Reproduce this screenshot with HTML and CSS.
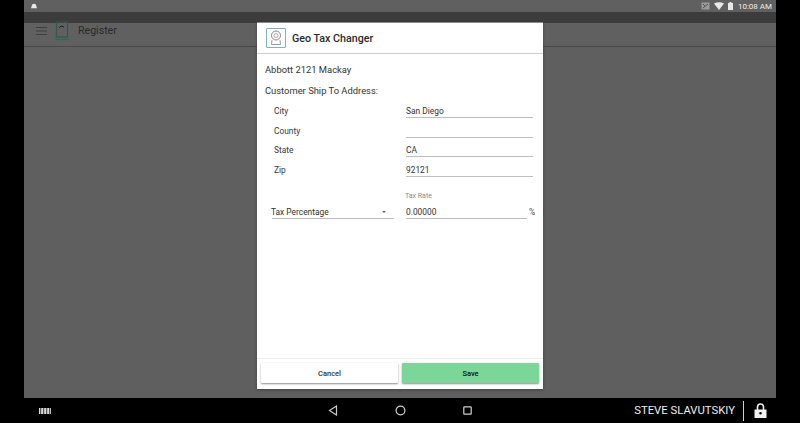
FILE: index.html
```html
<!DOCTYPE html>
<html lang="en">
<head>
    <meta charset="UTF-8">
    <meta name="viewport" content="width=device-width, initial-scale=1.0">
    <title>Geo Tax Changer</title>
    <link rel="stylesheet" href="styles.css">
</head>
<body>
    <div class="screen">
        <div class="status-bar">
            <svg class="status-app" width="6" height="6" viewBox="0 0 8 7"><path d="M1 3 Q1 0.5 4 0.5 Q7 0.5 7 3 L8 6.5 L0 6.5 Z" fill="#e8e8e8"/></svg>
            <div class="status-right">
                <svg width="9" height="8" viewBox="0 0 9 8"><rect x="0.5" y="0.5" width="8" height="7" fill="#9a9a9a"/><path d="M2 6 L7 2 M2 2 L4 4" stroke="#555" fill="none"/></svg>
                <svg width="10" height="8" viewBox="0 0 10 8"><path d="M0 1.5 Q5 -1 10 1.5 L5 8 Z" fill="#e8e8e8"/></svg>
                <svg width="5" height="8" viewBox="0 0 5 8"><path d="M1.5 0 H3.5 V1 H5 V8 H0 V1 H1.5 Z" fill="#e8e8e8"/></svg>
                <span class="clock">10:08 AM</span>
            </div>
        </div>
        <div class="dark-strip"></div>
        <div class="app-bar">
            <svg class="menu-icon" width="11" height="8" viewBox="0 0 11 8"><path d="M0 .5H11M0 4H11M0 7.5H11" stroke="#3f3f3f"/></svg>
            <svg class="register-icon" width="14" height="20" viewBox="0 0 14 20"><rect x="1.5" y="1" width="11" height="15" fill="none" stroke="#2f5a4c" stroke-width="1.2"/><path d="M4 7 L6 5 L9 6" stroke="#222" fill="none"/><path d="M0 18.5 H14" stroke="#2f6a56" stroke-width="1.4"/></svg>
            <span class="app-title">Register</span>
        </div>
        <div class="content"></div>

        <div class="dialog">
            <div class="dialog-head">
                <div class="logo">
                    <svg width="12" height="16" viewBox="0 0 12 16"><circle cx="6" cy="5.5" r="4.5" fill="none" stroke="#888"/><circle cx="6" cy="5.5" r="2" fill="none" stroke="#aaa"/><path d="M2 10 L1.5 14.5 H10.5 L10 10" fill="none" stroke="#999"/></svg>
                </div>
                <h1>Geo Tax Changer</h1>
            </div>
            <div class="dialog-body">
                <p class="line">Abbott 2121 Mackay</p>
                <p class="line line-ship">Customer Ship To Address:</p>
                <div class="fields">
                    <label>City</label><div class="input">San Diego</div>
                    <label>County</label><div class="input"></div>
                    <label>State</label><div class="input">CA</div>
                    <label>Zip</label><div class="input">92121</div>
                </div>
                <div class="tax-row">
                    <div class="select">
                        <span>Tax Percentage</span>
                        <i class="caret"></i>
                    </div>
                    <div class="rate">
                        <div class="rate-label">Tax Rate</div>
                        <div class="rate-input">
                            <div class="input">0.00000</div>
                            <span class="percent">%</span>
                        </div>
                    </div>
                </div>
            </div>
            <div class="dialog-foot">
                <button class="btn">Cancel</button>
                <button class="btn btn-save">Save</button>
            </div>
        </div>
    </div>

    <div class="nav-bar">
        <div class="barcode"></div>
        <div class="nav-buttons">
            <svg width="10" height="11" viewBox="0 0 10 11"><path d="M8.5 1 L1.5 5.5 L8.5 10 Z" fill="none" stroke="#c8c8c8" stroke-width="1.2"/></svg>
            <svg width="11" height="11" viewBox="0 0 11 11"><circle cx="5.5" cy="5.5" r="4.4" fill="none" stroke="#d0d0d0" stroke-width="1.2"/></svg>
            <svg width="9" height="9" viewBox="0 0 9 9"><rect x="0.8" y="0.8" width="7.4" height="7.4" rx="0.6" fill="none" stroke="#d0d0d0" stroke-width="1.2"/></svg>
        </div>
        <div class="user">
            <span class="user-name">STEVE SLAVUTSKIY</span>
            <span class="user-sep"></span>
            <svg width="13" height="15" viewBox="0 0 13 15"><path d="M3.5 7 V4 A3 3 0 0 1 9.5 4 V7" fill="none" stroke="#eee" stroke-width="1.6"/><path fill-rule="evenodd" d="M0.5 6.5 H12.5 V15 H0.5 Z M6.5 9 A1.3 1.3 0 1 0 6.5 11.6 A1.3 1.3 0 1 0 6.5 9 Z" fill="#f2f2f2"/></svg>
        </div>
    </div>
</body>
</html>
```

FILE: styles.css
```css
* {
    box-sizing: border-box;
}

html, body {
    height: 100%;
}

body {
    margin: 0;
    background-color: #000;
    font-family: Roboto, "Liberation Sans", sans-serif;
    color: #222;
    display: flex;
    flex-direction: column;
    overflow: hidden;
}

.screen {
    position: relative;
    flex: 1;
    margin: 0 24px;
    display: flex;
    flex-direction: column;
    background-color: #5f5f5f;
}

.status-bar {
    height: 12px;
    display: flex;
    align-items: center;
    justify-content: space-between;
    background-color: #606060;
    padding: 0 4px 0 7px;
}

.status-right {
    display: flex;
    align-items: center;
    gap: 4px;
}

.clock {
    margin-left: 1px;
    font-size: 8px;
    color: #ececec;
}

.dark-strip {
    height: 11px;
    background-color: #3c3c3c;
}

.app-bar {
    height: 24px;
    display: flex;
    align-items: center;
    padding: 0 0 8px 12px;
    border-bottom: 1px solid #4a4a4a;
    background-color: #606060;
}

.register-icon {
    margin-left: 8px;
}

.app-title {
    margin-left: 9px;
    font-size: 10.6px;
    color: #2a2a2a;
}

.content {
    flex: 1;
}

.dialog {
    position: absolute;
    top: 22px;
    left: 233px;
    width: 286px;
    height: 367px;
    display: flex;
    flex-direction: column;
    background-color: #fff;
    border-top: 1px solid #8a8a8a;
    box-shadow: 0 1px 3px rgba(0, 0, 0, 0.3);
}

.dialog-head {
    height: 31px;
    display: flex;
    align-items: center;
    padding-left: 9px;
    border-bottom: 1px solid #cfcfcf;
}

.logo {
    width: 20px;
    height: 20px;
    display: flex;
    align-items: center;
    justify-content: center;
    border: 1px solid #7fb5b5;
    border-radius: 1px;
}

.dialog-head h1 {
    margin: 0 0 0 6px;
    font-size: 10.7px;
    font-weight: 500;
    color: #2a2a2a;
}

.dialog-body {
    flex: 1;
    padding: 9px 6px 0 8px;
}

.line {
    margin: 0;
    height: 13px;
    line-height: 13px;
    font-size: 9.4px;
    color: #333;
}

.line-ship {
    margin-top: 8px;
}

.fields {
    margin-top: 5px;
    padding-left: 9px;
    display: grid;
    grid-template-columns: 132px 127px;
    grid-auto-rows: 19.6px;
}

.fields label {
    font-size: 8.4px;
    line-height: 12px;
    padding-top: 3px;
    color: #3a3a3a;
}

.input {
    border-bottom: 1px solid #bdbdbd;
    padding-top: 2px;
    font-size: 8.4px;
    line-height: 14px;
    height: 16px;
    color: #333;
}

.tax-row {
    margin-top: 12px;
    padding-left: 7px;
    display: flex;
    align-items: flex-end;
}

.select {
    flex: none;
    width: 122px;
    height: 16px;
    display: flex;
    align-items: center;
    justify-content: space-between;
    padding: 2px 8px 0 0;
    border-bottom: 1px solid #bdbdbd;
    font-size: 8.4px;
    color: #333;
}

.select span {
    margin-left: -1px;
}

.caret {
    width: 0;
    height: 0;
    border-left: 2.5px solid transparent;
    border-right: 2.5px solid transparent;
    border-top: 2.5px solid #666;
}

.rate {
    flex: none;
    margin-left: 12px;
}

.rate-label {
    margin-left: -1px;
    margin-bottom: 2px;
    font-size: 7px;
    line-height: 9px;
    color: #888;
}

.rate-input {
    display: flex;
}

.rate-input .input {
    width: 121px;
}

.percent {
    margin-left: 2px;
    padding-top: 2px;
    font-size: 8.4px;
    line-height: 14px;
    color: #444;
}

.dialog-foot {
    height: 30px;
    padding: 4px 4px 0;
    display: flex;
    gap: 4px;
    border-top: 1px solid #eee;
    margin-bottom: 1px;
}

.btn {
    flex: 1;
    height: 20px;
    padding: 0;
    border: none;
    border-radius: 1px;
    background-color: #fff;
    box-shadow: 0 1px 2px rgba(0, 0, 0, 0.45);
    font-family: inherit;
    font-size: 7.5px;
    font-weight: 500;
    color: #333;
}

.btn-save {
    background-color: #7bd698;
    color: #111;
}

.nav-bar {
    height: 25px;
    position: relative;
    display: flex;
    align-items: center;
    justify-content: space-between;
    padding: 0 33px 0 39px;
    background-color: #000;
}

.barcode {
    width: 12px;
    height: 6px;
    background: repeating-linear-gradient(90deg, #ddd 0 1px, #555 1px 2px, #bbb 2px 3px);
}

.nav-buttons {
    position: absolute;
    left: 328px;
    top: 7px;
    display: flex;
    align-items: center;
    gap: 57px;
}

.user {
    display: flex;
    align-items: center;
}

.user-name {
    font-size: 11.3px;
    color: #eee;
}

.user-sep {
    width: 1px;
    height: 20px;
    margin: 0 10px 0 8px;
    background-color: #ccc;
}
```
